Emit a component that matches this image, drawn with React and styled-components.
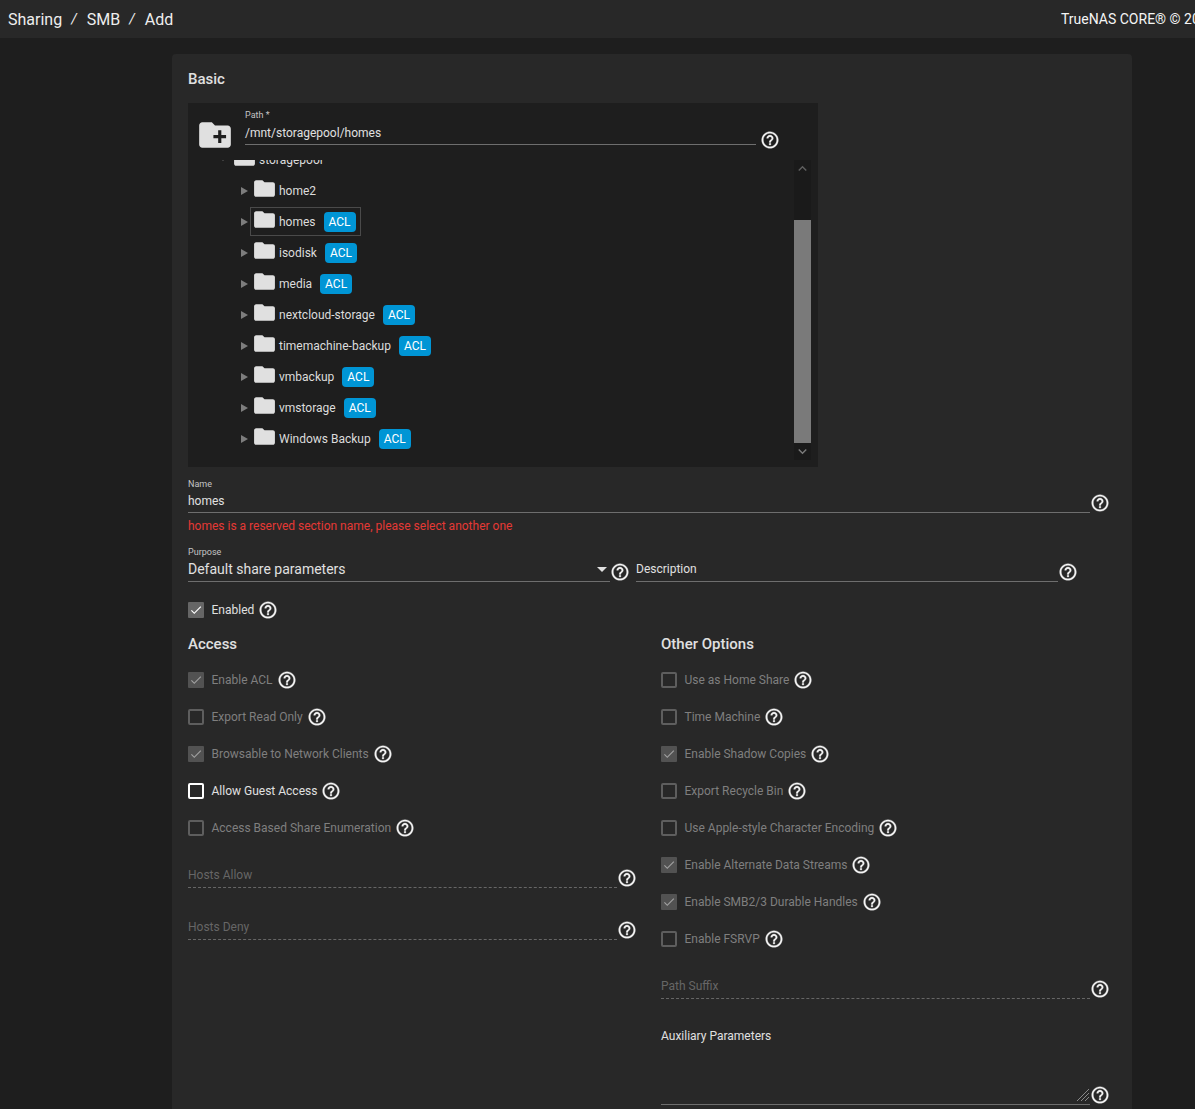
import React from 'react';
import styled, { createGlobalStyle } from 'styled-components';
import { MdHelpOutline, MdFolder, MdCreateNewFolder, MdCheck, MdKeyboardArrowUp, MdKeyboardArrowDown, MdArrowDropDown } from 'react-icons/md';

const GlobalStyle = createGlobalStyle`
  html, body {
    margin: 0;
    height: 1109px;
    overflow: hidden;
    background: #1e1e1e;
    font-family: Roboto, "Liberation Sans", sans-serif;
    color: #e0e0e0;
  }
`;

const Page = styled.div`
  width: 1195px;
  height: 1109px;
  overflow: hidden;
`;

const Topbar = styled.header`
  display: grid;
  grid-template-columns: 1053px auto;
  align-items: center;
  height: 38px;
  padding-left: 8px;
  background: #282828;
  white-space: nowrap;
`;

const Crumbs = styled.nav`
  display: flex;
  align-items: center;
  font-size: 16px;
  color: #eeeeee;
`;

const Slash = styled.span`
  margin: 0 10px 0 9px;
  font-size: 14px;
  font-style: italic;
`;

const Copyright = styled.div`
  font-size: 14px;
  color: #f5f5f5;
`;

const Main = styled.main`
  padding: 16px 0 0 172px;
`;

const Card = styled.section`
  width: 960px;
  height: 1100px;
  box-sizing: border-box;
  padding: 16px 16px 0;
  background: #282828;
  border-radius: 4px;
`;

const Heading = styled.h3`
  margin: 0;
  font-size: 15px;
  line-height: 18px;
  font-weight: 500;
  color: #e0e0e0;
`;

const Explorer = styled.div`
  width: 630px;
  height: 364px;
  margin-top: 15px;
  background: #1e1e1e;
  overflow: hidden;
`;

const PathRow = styled.div`
  display: flex;
  align-items: flex-end;
  height: 57px;
  box-sizing: border-box;
  padding: 6px 0 15px 8px;
`;

const FolderButton = styled.div`
  display: flex;
  width: 38px;
  height: 38px;
  margin-right: 11px;
  margin-bottom: -9px;
  color: #e0e0e0;
`;

const PathField = styled.div`
  width: 511px;
`;

const TinyLabel = styled.div`
  font-size: 9px;
  line-height: 12px;
  color: #c4c4c4;
`;

const Underlined = styled.div`
  display: flex;
  align-items: ${(p) => (p.$dashed ? 'flex-end' : 'center')};
  justify-content: space-between;
  height: ${(p) => p.$h || 23}px;
  box-sizing: border-box;
  padding-bottom: ${(p) => (p.$dashed ? 5 : 1)}px;
  border-bottom: 1px ${(p) => (p.$dashed ? 'dashed #666666' : 'solid #6e6e6e')};
  font-size: ${(p) => p.$size || 12}px;
  line-height: 14px;
  color: ${(p) => p.$color || '#e0e0e0'};
`;

const PathValue = styled(Underlined)`
  padding-top: 1px;
  padding-bottom: 0;
`;

const TreeArea = styled.div`
  display: flex;
  height: 307px;
  overflow: hidden;
`;

const TreeList = styled.ul`
  flex: 1;
  margin: -16px 0 0;
  padding: 0 0 0 33px;
  list-style: none;
`;

const TreeRow = styled.li`
  display: flex;
  align-items: center;
  height: 31px;
  padding-left: ${(p) => (p.$root ? 0 : 20)}px;
  font-size: 12px;
  color: #dcdcdc;
`;

const Arrow = styled.span`
  width: 0;
  height: 0;
  margin-right: 6px;
  border-style: solid;
  border-width: 4px 0 4px 7px;
  border-color: transparent transparent transparent #7d7d7d;
`;

const RootArrow = styled.span`
  width: 0;
  height: 0;
  margin-right: 9px;
  border-style: solid;
  border-width: 3px 2px 0;
  border-color: #7d7d7d transparent transparent;
`;

const NodeBox = styled.div`
  display: flex;
  align-items: center;
  height: 29px;
  box-sizing: border-box;
  padding: 0 ${(p) => (p.$active ? '4px' : '5px')} 0 ${(p) => (p.$active ? '3px' : '4px')};
  margin-left: -4px;
  border: ${(p) => (p.$active ? '1px solid #4a4a4a' : '0')};
`;

const NodeFolder = styled.span`
  display: flex;
  width: 25px;
  height: 25px;
  margin: -4px 2px 0 -2px;
  color: #e0e0e0;
`;

const Badge = styled.span`
  display: inline-block;
  margin-left: 8px;
  padding: 0 5px;
  height: 20px;
  line-height: 20px;
  border-radius: 4px;
  background: #0095d5;
  color: #ffffff;
  font-size: 12px;
`;

const Scrollbar = styled.div`
  display: flex;
  flex-direction: column;
  width: 17px;
  height: 300px;
  margin-right: 7px;
  background: #1a1a1a;
  color: #5f5f5f;
`;

const ScrollBtn = styled.div`
  display: flex;
  align-items: center;
  justify-content: center;
  height: 17px;
  color: ${(p) => p.$color || '#5f5f5f'};
`;

const ScrollTrack = styled.div`
  flex: 1;
  padding-top: 43px;
`;

const Thumb = styled.div`
  height: 223px;
  background: #7a7a7a;
`;

const Help = styled(MdHelpOutline)`
  flex: none;
  width: 20px;
  height: 20px;
  color: #f5f5f5;
  stroke-width: 0.35px;

  /* first path is the icon's empty 24x24 frame */
  path:first-child {
    stroke: none;
  }
`;

const PathHelp = styled(Help)`
  margin: 0 0 -5px 4px;
`;

const FieldRow = styled.div`
  display: flex;
  align-items: flex-end;
  width: ${(p) => p.$w || 'auto'};
`;

const Grow = styled.div`
  flex: 1;
  min-width: 0;
`;

const NameLabel = styled(TinyLabel)`
  margin-top: 11px;
`;

const ErrorText = styled.div`
  margin-top: 6px;
  font-size: 12px;
  line-height: 14px;
  color: #e53935;
`;

const PurposeLabel = styled(TinyLabel)`
  margin-top: 13px;
`;

const SplitRow = styled.div`
  display: grid;
  grid-template-columns: 442px 442px;
  gap: 6px;
  width: 890px;
`;

const SelectArrow = styled(MdArrowDropDown)`
  margin-right: -4px;
`;

const CheckRowBox = styled.div`
  display: flex;
  align-items: center;
  height: 37px;
  font-size: 12px;
  color: ${(p) => (p.$muted ? '#7f7f7f' : '#e0e0e0')};
`;

const Box = styled.span`
  display: flex;
  align-items: center;
  justify-content: center;
  flex: none;
  width: 16px;
  height: 16px;
  box-sizing: border-box;
  margin-right: 7.5px;
  color: ${(p) => (p.$muted ? '#a0a0a0' : '#ffffff')};
  background: ${(p) => (p.$checked ? (p.$muted ? '#525252' : '#666666') : 'transparent')};
  border: ${(p) => (p.$checked ? '0' : `2px solid ${p.$muted ? '#5e5e5e' : '#ffffff'}`)};
  border-radius: ${(p) => (p.$checked ? '1px' : '2px')};
`;

const RowHelp = styled(Help)`
  margin-left: 4px;
`;

const EnabledWrap = styled.div`
  margin-top: 9px;
`;

const Columns = styled.div`
  display: grid;
  grid-template-columns: 449px 449px;
  gap: 24px;
  margin-top: 7px;
`;

const RowList = styled.div`
  margin-top: 8px;
`;

const AuxLabel = styled.div`
  margin-top: 30px;
  font-size: 12px;
  line-height: 14px;
  color: #e0e0e0;
`;

const AuxBox = styled.div`
  position: relative;
  height: 61px;
  border-bottom: 1px solid #6e6e6e;
`;

const Grip = styled.svg`
  position: absolute;
  right: 0;
  bottom: 2px;
  width: 14px;
  height: 14px;
`;

const nodes = [
  { name: 'home2', acl: false },
  { name: 'homes', acl: true, active: true },
  { name: 'isodisk', acl: true },
  { name: 'media', acl: true },
  { name: 'nextcloud-storage', acl: true },
  { name: 'timemachine-backup', acl: true },
  { name: 'vmbackup', acl: true },
  { name: 'vmstorage', acl: true },
  { name: 'Windows Backup', acl: true },
];

const accessRows = [
  { label: 'Enable ACL', checked: true, muted: true },
  { label: 'Export Read Only', muted: true },
  { label: 'Browsable to Network Clients', checked: true, muted: true },
  { label: 'Allow Guest Access' },
  { label: 'Access Based Share Enumeration', muted: true },
];

const otherRows = [
  { label: 'Use as Home Share', muted: true },
  { label: 'Time Machine', muted: true },
  { label: 'Enable Shadow Copies', checked: true, muted: true },
  { label: 'Export Recycle Bin', muted: true },
  { label: 'Use Apple-style Character Encoding', muted: true },
  { label: 'Enable Alternate Data Streams', checked: true, muted: true },
  { label: 'Enable SMB2/3 Durable Handles', checked: true, muted: true },
  { label: 'Enable FSRVP', muted: true },
];

const CheckRow = ({ label, checked, muted }) => (
  <CheckRowBox $muted={muted}>
    <Box $checked={checked} $muted={muted}>{checked && <MdCheck size={14} />}</Box>
    {label}
    <RowHelp />
  </CheckRowBox>
);

const MutedField = ({ label, h }) => (
  <FieldRow>
    <Grow>
      <Underlined $dashed $h={h} $color="#666666">{label}</Underlined>
    </Grow>
    <Help />
  </FieldRow>
);

const App = () => {
  return (
    <Page>
      <GlobalStyle />
      <Topbar>
        <Crumbs>
          Sharing<Slash>/</Slash>SMB<Slash>/</Slash>Add
        </Crumbs>
        <Copyright>TrueNAS CORE® © 20</Copyright>
      </Topbar>
      <Main>
        <Card>
          <Heading>Basic</Heading>
          <Explorer>
            <PathRow>
              <FolderButton><MdCreateNewFolder size={38} /></FolderButton>
              <PathField>
                <TinyLabel>Path *</TinyLabel>
                <PathValue $h={24}>/mnt/storagepool/homes</PathValue>
              </PathField>
              <PathHelp />
            </PathRow>
            <TreeArea>
              <TreeList>
                <TreeRow $root>
                  <RootArrow />
                  <NodeFolder><MdFolder size={25} /></NodeFolder>
                  storagepool
                </TreeRow>
                {nodes.map((n) => (
                  <TreeRow key={n.name}>
                    <Arrow />
                    <NodeBox $active={n.active}>
                      <NodeFolder><MdFolder size={25} /></NodeFolder>
                      {n.name}
                      {n.acl && <Badge>ACL</Badge>}
                    </NodeBox>
                  </TreeRow>
                ))}
              </TreeList>
              <Scrollbar>
                <ScrollBtn><MdKeyboardArrowUp size={17} /></ScrollBtn>
                <ScrollTrack><Thumb /></ScrollTrack>
                <ScrollBtn $color="#7a7a7a"><MdKeyboardArrowDown size={17} /></ScrollBtn>
              </Scrollbar>
            </TreeArea>
          </Explorer>

          <NameLabel>Name</NameLabel>
          <FieldRow $w="922px">
            <Grow><Underlined>homes</Underlined></Grow>
            <Help />
          </FieldRow>
          <ErrorText>homes is a reserved section name, please select another one</ErrorText>

          <PurposeLabel>Purpose</PurposeLabel>
          <SplitRow>
            <FieldRow>
              <Grow>
                <Underlined $size={14} $h={24}>
                  Default share parameters
                  <SelectArrow size={24} />
                </Underlined>
              </Grow>
              <Help />
            </FieldRow>
            <FieldRow>
              <Grow><Underlined $h={24}>Description</Underlined></Grow>
              <Help />
            </FieldRow>
          </SplitRow>

          <EnabledWrap>
            <CheckRow label="Enabled" checked />
          </EnabledWrap>

          <Columns>
            <div>
              <Heading>Access</Heading>
              <RowList>
                {accessRows.map((r) => <CheckRow key={r.label} {...r} />)}
              </RowList>
              <MutedField label="Hosts Allow" h={42} />
              <MutedField label="Hosts Deny" h={52} />
            </div>
            <div>
              <Heading>Other Options</Heading>
              <RowList>
                {otherRows.map((r) => <CheckRow key={r.label} {...r} />)}
              </RowList>
              <MutedField label="Path Suffix" h={42} />
              <AuxLabel>Auxiliary Parameters</AuxLabel>
              <FieldRow>
                <Grow>
                  <AuxBox>
                    <Grip viewBox="0 0 14 14">
                      <path d="M1 13 L13 1 M5 13 L13 5 M9 13 L13 9" stroke="#8a8a8a" strokeWidth="1" fill="none" />
                    </Grip>
                  </AuxBox>
                </Grow>
                <Help />
              </FieldRow>
            </div>
          </Columns>
        </Card>
      </Main>
    </Page>
  );
};

export default App;
